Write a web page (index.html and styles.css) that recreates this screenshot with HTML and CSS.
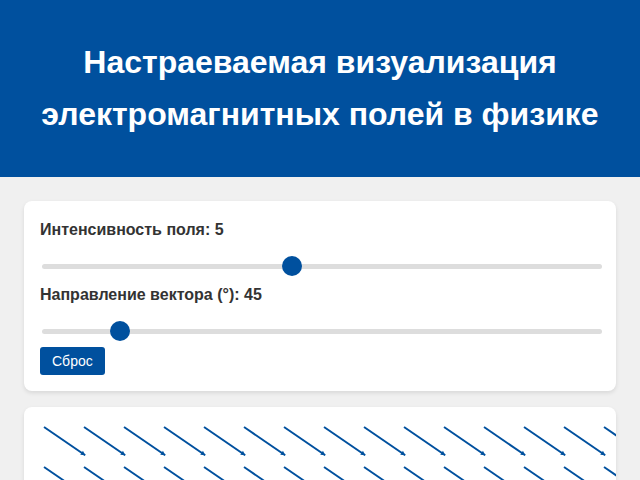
FILE: index.html
```html
<!DOCTYPE html>
<html>
<head>
    <title>Визуализация электромагнитных полей</title>
    <meta charset="UTF-8">
    <link rel="stylesheet" href="styles.css">
</head>
<body>
    <header class="header">
        <h1>Настраеваемая визуализация электромагнитных полей в физике</h1>
    </header>

    <div class="container">
        <div class="card controls">
            <div class="control">
                <label for="intensity">Интенсивность поля: <span id="intensityValue">5</span></label>
                <input type="range" id="intensity" min="1" max="10" value="5">
            </div>
            <div class="control">
                <label for="direction">Направление вектора (°): <span id="directionValue">45</span></label>
                <input type="range" id="direction" min="0" max="360" value="45">
            </div>
            <button id="reset" class="btn">Сброс</button>
        </div>

        <div class="card field">
            <svg id="field" width="620" height="300"></svg>
        </div>
    </div>

    <script>
        var NS = "http://www.w3.org/2000/svg";

        // Рисуем поле стрелок
        function drawField() {
            var svg = document.getElementById("field");
            var intensity = +document.getElementById("intensity").value;
            var direction = +document.getElementById("direction").value;
            svg.innerHTML = "";

            var len = intensity * 10;
            var ang = direction * 0.766 * Math.PI / 180;
            var dx = Math.cos(ang) * len;
            var dy = Math.sin(ang) * len;

            for (var y = 20; y < 300; y += 40) {
                for (var x = 20; x < 620; x += 40) {
                    var line = document.createElementNS(NS, "line");
                    line.setAttribute("x1", x);
                    line.setAttribute("y1", y);
                    line.setAttribute("x2", x + dx);
                    line.setAttribute("y2", y + dy);
                    line.setAttribute("class", "arrow");
                    svg.appendChild(line);

                    // наконечник
                    var ex = x + dx, ey = y + dy;
                    var a1 = ang + Math.PI - 0.5, a2 = ang + Math.PI + 0.5;
                    var head = document.createElementNS(NS, "polygon");
                    head.setAttribute("points",
                        ex + "," + ey + " " +
                        (ex + Math.cos(a1) * 5) + "," + (ey + Math.sin(a1) * 5) + " " +
                        (ex + Math.cos(a2) * 5) + "," + (ey + Math.sin(a2) * 5));
                    head.setAttribute("class", "head");
                    svg.appendChild(head);
                }
            }
        }

        function update() {
            document.getElementById("intensityValue").textContent = document.getElementById("intensity").value;
            document.getElementById("directionValue").textContent = document.getElementById("direction").value;
            drawField();
        }

        document.getElementById("intensity").oninput = update;
        document.getElementById("direction").oninput = update;
        document.getElementById("reset").onclick = function() {
            document.getElementById("intensity").value = 5;
            document.getElementById("direction").value = 45;
            update();
        };

        update();
    </script>
</body>
</html>
```

FILE: styles.css
```css
body {
    margin: 0;
    background-color: #f0f0f0;
    font-family: "Liberation Sans", Arial, sans-serif;
    color: #333;
}
.header {
    background-color: #00509e;
    color: #fff;
    padding: 36px 20px 37px;
    text-align: center;
}
.header h1 {
    margin: 0;
    font-size: 32px;
    line-height: 52px;
}
.container {
    padding: 24px;
    display: flex;
    flex-direction: column;
    gap: 16px;
}
.card {
    background-color: #fff;
    border-radius: 8px;
    box-shadow: 0 2px 4px rgba(0, 0, 0, 0.1);
}
.controls {
    padding: 20px 16px 16px;
}
.control label {
    display: block;
    font-weight: bold;
    font-size: 16px;
    margin-bottom: 17px;
}
.control + .control {
    margin-top: 10px;
}
.control input[type=range] {
    -webkit-appearance: none;
    appearance: none;
    display: block;
    width: 100%;
    height: 20px;
    margin: 2px 0 2px 2px;
    background: transparent;
}
.control input[type=range]::-webkit-slider-runnable-track {
    height: 5px;
    background: #ddd;
    border-radius: 3px;
}
.control input[type=range]::-webkit-slider-thumb {
    -webkit-appearance: none;
    width: 20px;
    height: 20px;
    margin-top: -7.5px;
    border-radius: 50%;
    background: #00509e;
}
.btn {
    display: block;
    margin-top: 6px;
    padding: 6px 12px;
    height: 28px;
    font-family: "Liberation Sans", Arial, sans-serif;
    font-size: 14px;
    line-height: 16px;
    color: #fff;
    background-color: #00509e;
    border: none;
    border-radius: 3px;
}
.field {
    overflow: hidden;
    height: 300px;
}
.field svg {
    display: block;
}
.arrow {
    stroke: #00509e;
    stroke-width: 2;
}
.head {
    fill: #00509e;
}
```
